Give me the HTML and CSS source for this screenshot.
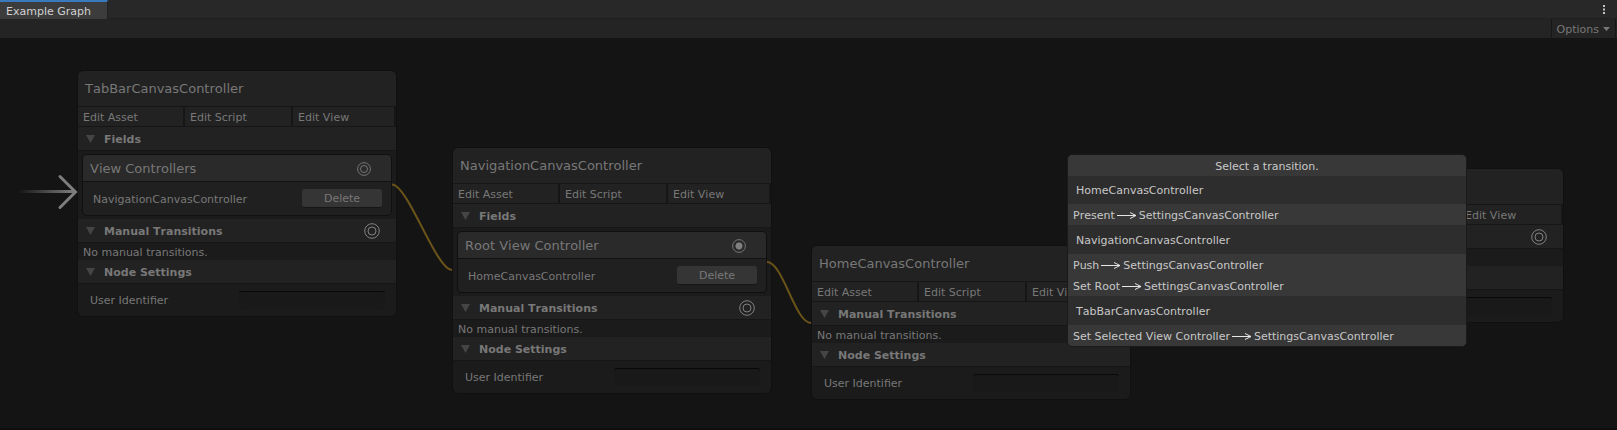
FILE: index.html
```
<!DOCTYPE html>
<html lang="en">
<head>
<meta charset="utf-8">
<title>Example Graph</title>
<link rel="stylesheet" href="styles.css">
</head>
<body>
<svg class="defs" aria-hidden="true">
  <symbol id="ring" viewBox="0 0 16 16"><circle cx="8" cy="8" r="7.3"/><circle cx="8" cy="8" r="4"/></symbol>
  <symbol id="ring-on" viewBox="0 0 16 16"><circle cx="8" cy="8" r="7.3"/><circle class="dot" cx="8" cy="8" r="3.6"/></symbol>
  <symbol id="arrow" viewBox="0 0 20 9"><path d="M0 4.5H19"/><path d="M13 1.500l6 3-6 3"/></symbol>
</svg>
<header class="tabs">
  <button class="tab">Example Graph</button>
  <button class="kebab" aria-label="Window menu"><svg viewBox="0 0 3 9"><path d="M0 0h2v2H0zM0 3.500h2v2H0zM0 7h2v2H0z"/></svg></button>
</header>
<div class="toolbar">
  <button class="options">Options<svg viewBox="0 0 7 4"><path d="M0 0h7L3.500 4z"/></svg></button>
</div>
<main class="canvas">
  <article class="node node-tab">
    <h2 class="title">TabBarCanvasController</h2>
    <div class="actions"><button>Edit Asset</button><button>Edit Script</button><button>Edit View</button></div>
    <h3 class="section"><span class="fold"></span>Fields</h3>
    <div class="field">
      <div class="field-head">View Controllers<svg class="port"><use href="#ring"/></svg></div>
      <div class="field-row"><span>NavigationCanvasController</span><button class="delete">Delete</button></div>
    </div>
    <h3 class="section"><span class="fold"></span>Manual Transitions<svg class="port"><use href="#ring"/></svg></h3>
    <p class="empty">No manual transitions.</p>
    <h3 class="section"><span class="fold"></span>Node Settings</h3>
    <div class="setting"><label for="id1">User Identifier</label><input id="id1" type="text"></div>
  </article>

  <article class="node node-nav">
    <h2 class="title">NavigationCanvasController</h2>
    <div class="actions"><button>Edit Asset</button><button>Edit Script</button><button>Edit View</button></div>
    <h3 class="section"><span class="fold"></span>Fields</h3>
    <div class="field">
      <div class="field-head">Root View Controller<svg class="port"><use href="#ring-on"/></svg></div>
      <div class="field-row"><span>HomeCanvasController</span><button class="delete">Delete</button></div>
    </div>
    <h3 class="section"><span class="fold"></span>Manual Transitions<svg class="port"><use href="#ring"/></svg></h3>
    <p class="empty">No manual transitions.</p>
    <h3 class="section"><span class="fold"></span>Node Settings</h3>
    <div class="setting"><label for="id2">User Identifier</label><input id="id2" type="text"></div>
  </article>

  <article class="node node-home">
    <h2 class="title">HomeCanvasController</h2>
    <div class="actions"><button>Edit Asset</button><button>Edit Script</button><button>Edit View</button></div>
    <h3 class="section"><span class="fold"></span>Manual Transitions<svg class="port"><use href="#ring"/></svg></h3>
    <p class="empty">No manual transitions.</p>
    <h3 class="section"><span class="fold"></span>Node Settings</h3>
    <div class="setting"><label for="id3">User Identifier</label><input id="id3" type="text"></div>
  </article>

  <article class="node node-settings">
    <h2 class="title">SettingsCanvasController</h2>
    <div class="actions"><button>Edit Asset</button><button>Edit Script</button><button>Edit View</button></div>
    <h3 class="section"><span class="fold"></span>Manual Transitions<svg class="port"><use href="#ring"/></svg></h3>
    <p class="empty">No manual transitions.</p>
    <h3 class="section"><span class="fold"></span>Node Settings</h3>
    <div class="setting"><label for="id4">User Identifier</label><input id="id4" type="text"></div>
  </article>

  <svg class="wires" aria-hidden="true">
    <defs><linearGradient id="fade"><stop offset="0" stop-color="#7d7d7d" stop-opacity="0"/><stop offset="1" stop-color="#7d7d7d"/></linearGradient></defs>
    <rect x="18" y="152" width="56" height="3" fill="url(#fade)"/>
    <path class="entry" d="M60 138.500l15.500 15.500L60 169.500"/>
    <path class="wire" d="M392 146.500C408 146.500 436 232 452 232"/>
    <path class="wire" d="M767 224C783 224 795 285 811 285"/>
  </svg>

  <section class="popup">
    <h2 class="popup-title">Select a transition.</h2>
    <h3 class="group">HomeCanvasController</h3>
    <button class="choice">Present<svg><use href="#arrow"/></svg>SettingsCanvasController</button>
    <h3 class="group">NavigationCanvasController</h3>
    <button class="choice">Push<svg><use href="#arrow"/></svg>SettingsCanvasController</button>
    <button class="choice">Set Root<svg><use href="#arrow"/></svg>SettingsCanvasController</button>
    <h3 class="group">TabBarCanvasController</h3>
    <button class="choice">Set Selected View Controller<svg><use href="#arrow"/></svg>SettingsCanvasController</button>
  </section>
</main>
</body>
</html>
```

FILE: styles.css
```
* { box-sizing: border-box; }
body {
  margin: 0;
  min-height: 100vh;
  display: flex;
  flex-direction: column;
  background: #141414;
  color: #787878;
  font: 11px/17px "DejaVu Sans", Verdana, sans-serif;
  font-kerning: none;
}
h2, h3, p { margin: 0; font-size: 11px; font-weight: normal; }
button { border: 0; padding: 0; background: none; color: inherit; font: inherit; text-align: left; white-space: nowrap; }
.defs { position: absolute; width: 0; height: 0; }

.tabs { display: flex; justify-content: space-between; height: 19px; background: #282828; border-bottom: 1px solid #202020; }
.tab { height: 19px; padding: 1px 16px 0 6px; border-top: 2px solid #3a79bb; border-right: 1px solid #202020; background: #3c3c3c; color: #d2d2d2; }
.kebab { display: flex; align-items: center; padding-right: 11px; }
.kebab svg { width: 3px; height: 9px; fill: #c4c4c4; }
.toolbar { display: flex; justify-content: flex-end; height: 19px; padding-right: 1px; background: #242424; }
.options { display: flex; align-items: center; gap: 4px; padding: 1px 5px 0; border: solid #171717; border-width: 0 1px; }
.options svg { width: 7px; height: 4px; fill: #787878; }

.canvas { position: relative; flex: 1; overflow: hidden; border-bottom: 2px solid #100d0f; }
.wires { position: absolute; width: 100%; height: 100%; fill: none; }
.entry { stroke: #7d7d7d; stroke-width: 3; stroke-linecap: round; }
.wire { stroke: #695319; stroke-width: 2; }

.node { position: absolute; width: 320px; border: 1px solid #101010; border-radius: 6px; background: #1b1b1b; overflow: hidden; }
.node-tab { left: 77px; top: 32px; }
.node-nav { left: 452px; top: 109px; }
.node-home { left: 811px; top: 207px; }
.node-settings { left: 1244px; top: 130px; }
.title { padding: 9px 7px; font-size: 13px; background: #222; border-bottom: 1px solid #161616; }
.actions { display: grid; grid-template-columns: 105px 106px 1fr; gap: 2px; padding-right: 2px; background: #161616; border-bottom: 1px solid #161616; }
.actions button { padding: 2px 5px 0; background: #222; }
.section { display: flex; align-items: center; height: 24px; padding: 1px 16px 0 8px; font-weight: bold; background: #222; border-bottom: 1px solid #161616; }
.fold { width: 9px; height: 8px; margin-right: 9px; background: #454545; clip-path: polygon(0 0, 100% 0, 50% 100%); }
.port { width: 16px; height: 16px; margin-left: auto; fill: none; stroke: #808080; }
.dot { fill: #808080; }
.field { margin: 3px 4px; border: 1px solid #101010; border-radius: 5px; background: #202020; overflow: hidden; }
.field-head { display: flex; align-items: center; height: 27px; padding: 1px 20px 0 7px; font-size: 13px; background: #2a2a2a; border-bottom: 1px solid #121212; }
.field-head .port { width: 14px; height: 14px; }
.field-row { display: flex; align-items: center; justify-content: space-between; height: 33px; padding: 0 9px 0 10px; }
.field-row span { padding-top: 2px; }
.delete { width: 80px; height: 19px; border-bottom: 1px solid #161616; border-radius: 3px; background: #353535; text-align: center; }
.empty { padding: 1px 5px 0; height: 17px; }
.setting { display: flex; align-items: center; justify-content: space-between; height: 32px; padding: 0 11px 0 12px; }
.setting input { width: 146px; height: 18px; border: 0; border-top: 1px solid #080808; border-radius: 3px; background: #191919; color: inherit; font: inherit; }

.popup { position: absolute; left: 1067px; top: 116px; width: 400px; border: 1px solid #1a1a1a; border-radius: 5px; background: #383838; color: #c8c8c8; overflow: hidden; }
.popup-title { padding: 3px 2px 1px; text-align: center; }
.group { padding: 6px 8px; background: #2d2d2d; }
.popup-title + .group { padding-bottom: 5px; }
.group:not(.popup-title + .group) { padding: 7px 8px 5px; }
.choice { display: flex; align-items: center; width: 100%; padding: 3px 5px 1px; }
.choice svg { width: 20px; height: 9px; margin: 0 2px; fill: none; stroke: #e6e6e6; }
```
